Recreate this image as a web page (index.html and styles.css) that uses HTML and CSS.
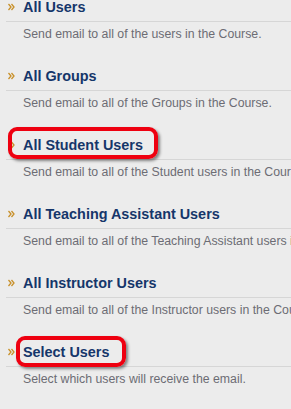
FILE: index.html
```html
<!DOCTYPE html>
<html>
<head>
<meta charset="utf-8">
<link rel="stylesheet" href="styles.css">
</head>
<body>
<ul class="list">
  <li class="item">
    <div class="head"><svg class="chev" viewBox="0 0 7 8"><path d="M0.5 1l2.5 3-2.5 3M3.5 1l2.5 3-2.5 3"/></svg><span class="title">All Users</span></div>
    <div class="desc">Send email to all of the users in the Course.</div>
  </li>
  <li class="item">
    <div class="head"><svg class="chev" viewBox="0 0 7 8"><path d="M0.5 1l2.5 3-2.5 3M3.5 1l2.5 3-2.5 3"/></svg><span class="title">All Groups</span></div>
    <div class="desc">Send email to all of the Groups in the Course.</div>
  </li>
  <li class="item">
    <div class="head"><svg class="chev" viewBox="0 0 7 8"><path d="M0.5 1l2.5 3-2.5 3M3.5 1l2.5 3-2.5 3"/></svg><span class="title">All Student Users</span><span class="mark mark-student"></span></div>
    <div class="desc">Send email to all of the Student users in the Course.</div>
  </li>
  <li class="item">
    <div class="head"><svg class="chev" viewBox="0 0 7 8"><path d="M0.5 1l2.5 3-2.5 3M3.5 1l2.5 3-2.5 3"/></svg><span class="title">All Teaching Assistant Users</span></div>
    <div class="desc">Send email to all of the Teaching Assistant users in the Course.</div>
  </li>
  <li class="item">
    <div class="head"><svg class="chev" viewBox="0 0 7 8"><path d="M0.5 1l2.5 3-2.5 3M3.5 1l2.5 3-2.5 3"/></svg><span class="title">All Instructor Users</span></div>
    <div class="desc">Send email to all of the Instructor users in the Course.</div>
  </li>
  <li class="item">
    <div class="head"><svg class="chev" viewBox="0 0 7 8"><path d="M0.5 1l2.5 3-2.5 3M3.5 1l2.5 3-2.5 3"/></svg><span class="title">Select Users</span><span class="mark mark-select"></span></div>
    <div class="desc">Select which users will receive the email.</div>
  </li>
</ul>
</body>
</html>
```
FILE: styles.css
```css
html, body {
  margin: 0;
  padding: 0;
  background: #ececec;
  overflow: hidden;
}
body {
  font-family: "Liberation Sans", Arial, sans-serif;
}
.list {
  list-style: none;
  margin: 0;
  padding: 0;
}
.item {
  margin: 0 0 28px 6px;
  white-space: nowrap;
}
.head {
  position: relative;
  display: flex;
  align-items: center;
  height: 14px;
  padding-bottom: 7px;
  border-bottom: 1px solid #d6d6d6;
}
.chev {
  width: 7px;
  height: 8px;
  margin-left: 2px;
  margin-right: 8px;
  fill: none;
  stroke: #c8902a;
  stroke-width: 1.3;
}
.title {
  font-size: 14.4px;
  font-weight: bold;
  line-height: 14px;
  color: #15366a;
}
.desc {
  padding: 5px 0 0 17px;
  font-size: 12.3px;
  line-height: 14px;
  color: #6c6c74;
}
.mark {
  position: absolute;
  box-sizing: border-box;
  border: 4px solid #ee0010;
  border-radius: 9px;
  box-shadow: 2px 2px 3px rgba(0, 0, 0, 0.45);
}
.mark-student {
  left: 2px;
  top: -11px;
  width: 150px;
  height: 32px;
}
.mark-select {
  left: 10px;
  top: -9px;
  width: 110px;
  height: 31px;
}
```
